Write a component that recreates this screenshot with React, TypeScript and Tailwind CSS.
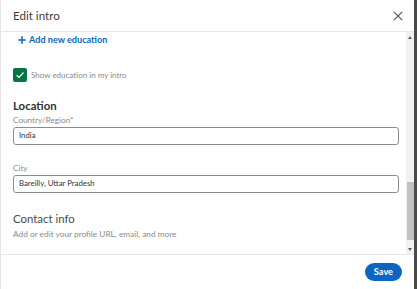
import React from 'react';

const font = { fontFamily: 'Lato, "Noto Sans", Arial, sans-serif' };

const App: React.FC = () => {
  return (
    <div className="flex h-[289px] w-[417px] overflow-hidden bg-white" style={font}>
      <div className="flex flex-1 flex-col border-l border-[#e6e6e6]">
        {/* header */}
        <div className="flex h-[32px] shrink-0 items-center justify-between border-b border-[#e8e8e8] pl-[12px] pr-[11px]">
          <h1 className="text-[11.6px] leading-none text-[#404040]">Edit intro</h1>
          <svg width="10" height="10" viewBox="0 0 10 10" className="text-[#555]">
            <path d="M0.8 0.8 L9.2 9.2 M9.2 0.8 L0.8 9.2" stroke="currentColor" strokeWidth="1.2" />
          </svg>
        </div>

        {/* body */}
        <div className="flex h-[222px] shrink-0">
          <div className="flex-1 overflow-hidden pl-[12px] pr-[7px] pt-[1px]">
            <button className="flex h-[14px] items-center gap-[3px] pl-[5px] text-[9.1px] font-bold leading-none text-[#0a66c2]">
              <svg width="8" height="8" viewBox="0 0 8 8">
                <path d="M4 0.3 V7.7 M0.3 4 H7.7" stroke="currentColor" strokeWidth="1.5" />
              </svg>
              Add new education
            </button>

            <label className="mt-[21px] flex h-[14px] items-center gap-[4px]">
              <span className="flex h-[14px] w-[14px] items-center justify-center rounded-[2px] bg-[#057642]">
                <svg width="10" height="10" viewBox="0 0 10 10">
                  <path d="M1.6 5.2 L4 7.5 L8.5 2.5" fill="none" stroke="white" strokeWidth="1.2" />
                </svg>
              </span>
              <span className="text-[8px] leading-none text-[#8a8a8a]">Show education in my intro</span>
            </label>

            <h2 className="mt-[17px] text-[11.4px] font-bold leading-[14px] text-[#333]">Location</h2>
            <div className="mt-[2px] text-[8.2px] leading-[10px] text-[#8a8a8a]">Country/Region*</div>
            <div className="mt-[2px] flex h-[18px] items-center rounded-[3px] border border-[#8c8c8c] px-[5px] text-[7.8px] text-[#333]">
              India
            </div>

            <div className="mt-[18px] text-[8.2px] leading-[10px] text-[#8a8a8a]">City</div>
            <div className="mt-[2px] flex h-[18px] items-center rounded-[3px] border border-[#8c8c8c] px-[5px] text-[7.8px] text-[#333]">
              Bareilly, Uttar Pradesh
            </div>

            <h2 className="mt-[19px] text-[11.4px] leading-[14px] text-[#4a4a4a]">Contact info</h2>
            <p className="mt-[3px] text-[8.3px] leading-[10px] text-[#8a8a8a]">
              Add or edit your profile URL, email, and more
            </p>
          </div>

          {/* scrollbar */}
          <div className="flex w-[8px] flex-col items-center bg-[#f1f1f1]">
            <div className="flex h-[10px] items-center">
              <div className="h-0 w-0 border-x-[2.5px] border-b-[3px] border-x-transparent border-b-[#606060]" />
            </div>
            <div className="flex-1" />
            <div className="h-[58px] w-[7px] bg-[#c1c1c1]" />
            <div className="h-[4px]" />
            <div className="flex h-[10px] items-center">
              <div className="h-0 w-0 border-x-[2.5px] border-t-[3px] border-x-transparent border-t-[#606060]" />
            </div>
          </div>
        </div>

        {/* footer */}
        <div className="flex h-[35px] shrink-0 items-center justify-end border-t border-[#e8e8e8] pr-[12px]">
          <button className="h-[18px] rounded-full bg-[#0a66c2] px-[9px] text-[9.2px] font-bold leading-none text-white">
            Save
          </button>
        </div>
      </div>
      <div className="w-[3px] bg-[#4a4a4a]" />
    </div>
  );
};

export default App;
